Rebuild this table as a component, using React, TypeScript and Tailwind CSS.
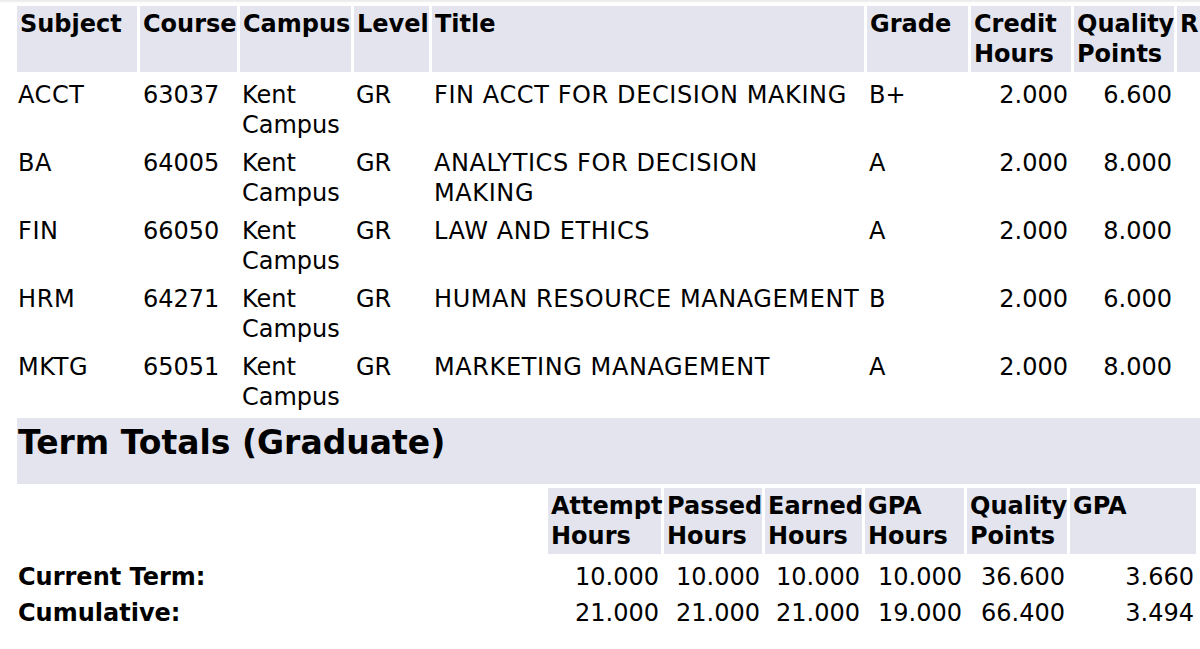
import React from "react";

type Course = {
  subject: string;
  course: string;
  campus: string;
  level: string;
  title: string;
  grade: string;
  credit: string;
  quality: string;
};

const courses: Course[] = [
  { subject: "ACCT", course: "63037", campus: "Kent Campus", level: "GR", title: "FIN ACCT FOR DECISION MAKING", grade: "B+", credit: "2.000", quality: "6.600" },
  { subject: "BA", course: "64005", campus: "Kent Campus", level: "GR", title: "ANALYTICS FOR DECISION MAKING", grade: "A", credit: "2.000", quality: "8.000" },
  { subject: "FIN", course: "66050", campus: "Kent Campus", level: "GR", title: "LAW AND ETHICS", grade: "A", credit: "2.000", quality: "8.000" },
  { subject: "HRM", course: "64271", campus: "Kent Campus", level: "GR", title: "HUMAN RESOURCE MANAGEMENT", grade: "B", credit: "2.000", quality: "6.000" },
  { subject: "MKTG", course: "65051", campus: "Kent Campus", level: "GR", title: "MARKETING MANAGEMENT", grade: "A", credit: "2.000", quality: "8.000" },
];

const totals = [
  { label: "Current Term:", values: ["10.000", "10.000", "10.000", "10.000", "36.600", "3.660"] },
  { label: "Cumulative:", values: ["21.000", "21.000", "21.000", "19.000", "66.400", "3.494"] },
];

const courseCols = "grid grid-cols-[120px_97px_111px_75px_432px_101px_100px_100px_120px] gap-x-[3px]";
const totalCols = "grid grid-cols-[528px_113px_98px_97px_99px_100px_126px] gap-x-[3px]";

const headCell = "bg-[#e3e4ed] px-[3px] py-[3px] font-bold";

export default function App() {
  return (
    <div className="w-[1200px] h-[649px] overflow-hidden bg-white text-black font-['DejaVu_Sans',Verdana,sans-serif] text-[24px] leading-[30px]">
      {/* top edge of the browser viewport */}
      <div className="h-[3px] bg-gradient-to-b from-[#e6e6e6] to-white" />

      <div className="pl-[17px] pt-[3px] w-[1340px]">
        {/* Course table header */}
        <div className={courseCols}>
          <div className={headCell}>Subject</div>
          <div className={headCell}>Course</div>
          <div className={headCell}>Campus</div>
          <div className={headCell}>Level</div>
          <div className={headCell}>Title</div>
          <div className={headCell}>Grade</div>
          <div className={headCell}>Credit Hours</div>
          <div className={headCell}>Quality Points</div>
          <div className={headCell}>R</div>
        </div>

        {/* Course rows */}
        <div className="mt-[5px] flex flex-col gap-y-[2px]">
          {courses.map((c) => (
            <div key={c.subject} className={courseCols}>
              <div className="px-[1px] py-[3px] tracking-[0.6px]">{c.subject}</div>
              <div className="px-[3px] py-[3px]">{c.course}</div>
              <div className="px-[2px] py-[3px]">{c.campus}</div>
              <div className="px-[2px] py-[3px]">{c.level}</div>
              <div className="px-[2px] py-[3px] tracking-[0.6px]">{c.title}</div>
              <div className="px-[2px] py-[3px]">{c.grade}</div>
              <div className="px-[3px] py-[3px] text-right">{c.credit}</div>
              <div className="px-[2px] py-[3px] text-right">{c.quality}</div>
              <div className="py-[3px]" />
            </div>
          ))}
        </div>

        {/* Term totals caption */}
        <div className="mt-[3px] h-[66px] bg-[#e3e4ed] pl-[1px] pt-[6px] text-[33px] leading-[38px] font-bold">
          Term Totals (Graduate)
        </div>

        {/* Totals header */}
        <div className={`${totalCols} mt-[4px]`}>
          <div />
          <div className={headCell}>Attempt Hours</div>
          <div className={headCell}>Passed Hours</div>
          <div className={headCell}>Earned Hours</div>
          <div className={headCell}>GPA Hours</div>
          <div className={headCell}>Quality Points</div>
          <div className={headCell}>GPA</div>
        </div>

        {/* Totals rows */}
        <div className="mt-[5px] flex flex-col">
          {totals.map((t) => (
            <div key={t.label} className={totalCols}>
              <div className="px-[1px] py-[3px] font-bold">{t.label}</div>
              {t.values.map((v, i) => (
                <div key={i} className="px-[2px] py-[3px] text-right">
                  {v}
                </div>
              ))}
            </div>
          ))}
        </div>
      </div>
    </div>
  );
}
